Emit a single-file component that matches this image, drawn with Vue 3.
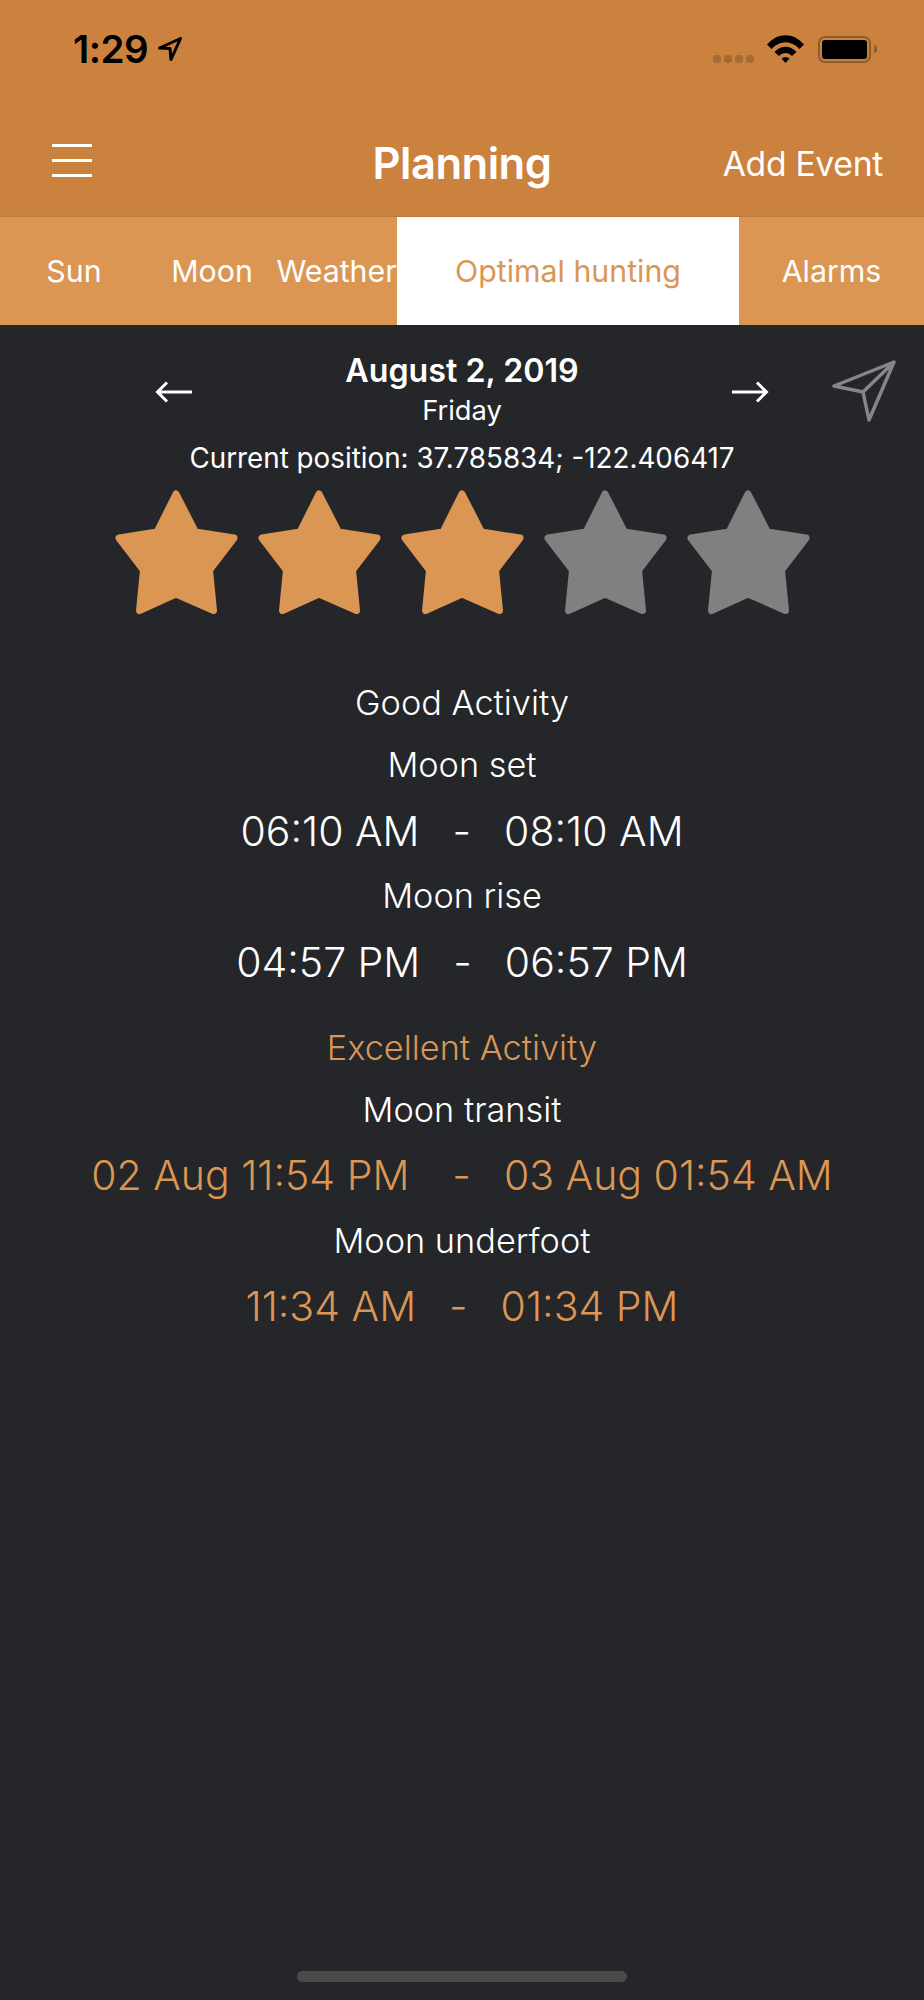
<template>
  <div class="screen">
    <header class="top">
      <div class="status">
        <div class="clock">
          <span>1:29</span>
          <svg class="loc" viewBox="0 0 24 24" width="24" height="24">
            <path d="M1.500 11 22.500 1.500 13 22.500 12 11.500Z" fill="none" stroke="#000" stroke-width="3" stroke-linejoin="round" />
          </svg>
        </div>
        <div class="indicators">
          <div class="signal">
            <i v-for="n in 4" :key="n"></i>
          </div>
          <svg class="wifi" viewBox="0 0 37 28" width="37" height="28">
            <path d="M0 9.500C10.500 -3 26.500 -3 37 9.500L32.500 14C24.500 5 12.500 5 4.500 14Z" fill="#000" />
            <path d="M7.500 17C14 10 23 10 29.500 17L25 21C21 17 16 17 12 21Z" fill="#000" />
            <path d="M14.500 23.500C17 21.500 20 21.500 22.500 23.500L18.500 28Z" fill="#000" />
          </svg>
          <div class="battery">
            <div class="cell"></div>
          </div>
          <div class="nub"></div>
        </div>
      </div>
      <div class="nav">
        <div class="menu"><i></i><i></i><i></i></div>
        <div class="title">Planning</div>
        <div class="action">Add Event</div>
      </div>
    </header>

    <nav class="tabs">
      <div
        v-for="tab in tabs"
        :key="tab.label"
        class="tab"
        :class="{ active: tab.active }"
        :style="{ width: tab.width + 'px' }"
      >
        {{ tab.label }}
      </div>
    </nav>

    <main class="content">
      <div class="date-row">
        <svg class="arrow" viewBox="0 0 38 24" width="38" height="24">
          <path d="M37 12H2.500M12 2.500 2.500 12 12 21.500" fill="none" stroke="#fff" stroke-width="3" />
        </svg>
        <div class="date">
          <div class="day">August 2, 2019</div>
          <div class="weekday">Friday</div>
        </div>
        <svg class="arrow" viewBox="0 0 38 24" width="38" height="24">
          <path d="M1 12H35.500M26 2.500 35.500 12 26 21.500" fill="none" stroke="#fff" stroke-width="3" />
        </svg>
        <svg class="send" viewBox="0 0 64 62" width="64" height="62">
          <path d="M62 2 2 26 31 32ZM62 2 37 60 31 32" fill="none" stroke="#85868a" stroke-width="3.500" stroke-linejoin="round" />
        </svg>
      </div>
      <div class="position">Current position: 37.785834; -122.406417</div>

      <div class="stars">
        <svg
          v-for="n in 5"
          :key="n"
          class="star"
          :class="{ on: n <= 3 }"
          viewBox="0 0 124 125"
          width="124"
          height="125"
        >
          <path d="M62 4 81.500 42 120 48 95.500 80 99.500 120.500 62 104 25.500 120.500 29.500 80 5 48 43 42Z" stroke-width="7" stroke-linejoin="round" />
        </svg>
      </div>

      <section v-for="group in groups" :key="group.title" class="group" :class="{ best: group.best }">
        <div class="label heading">{{ group.title }}</div>
        <template v-for="row in group.rows" :key="row.name">
          <div class="label">{{ row.name }}</div>
          <div class="times" :class="{ wide: row.wide }">
            <span class="from">{{ row.from }}</span>
            <span class="dash">-</span>
            <span>{{ row.to }}</span>
          </div>
        </template>
      </section>
    </main>

    <div class="home"></div>
  </div>
</template>

<script setup>
const tabs = [
  { label: 'Sun', width: 148 },
  { label: 'Moon', width: 128 },
  { label: 'Weather', width: 121 },
  { label: 'Optimal hunting', width: 342, active: true },
  { label: 'Alarms', width: 185 }
]

const groups = [
  {
    title: 'Good Activity',
    rows: [
      { name: 'Moon set', from: '06:10 AM', to: '08:10 AM' },
      { name: 'Moon rise', from: '04:57 PM', to: '06:57 PM' }
    ]
  },
  {
    title: 'Excellent Activity',
    best: true,
    rows: [
      { name: 'Moon transit', from: '02 Aug 11:54 PM', to: '03 Aug 01:54 AM', wide: true },
      { name: 'Moon underfoot', from: '11:34 AM', to: '01:34 PM' }
    ]
  }
]
</script>

<style>
html,
body {
  margin: 0;
  background: #24262a;
}
</style>

<style scoped>
.screen {
  position: relative;
  display: flex;
  flex-direction: column;
  width: 924px;
  height: 2000px;
  overflow: hidden;
  background: #24262a;
  color: #fff;
  font-family: Inter, "Noto Sans", sans-serif;
}

/* Header */
.top {
  height: 217px;
  box-sizing: border-box;
  background: #cb823e;
  border-bottom: 1px solid #bd7a3b;
}

.status {
  display: flex;
  justify-content: space-between;
  align-items: center;
  height: 98px;
  padding: 0 47px 0 73px;
  color: #000;
}

.clock {
  display: flex;
  align-items: center;
  gap: 10px;
  font-size: 38.500px;
  font-weight: 600;
  letter-spacing: -0.500px;
}

.indicators {
  display: flex;
  align-items: center;
}

.signal {
  display: flex;
  gap: 3px;
  margin: 20px 13px 0 0;
}

.signal i {
  width: 8px;
  height: 8px;
  border-radius: 3px;
  background: #a66a33;
}

.battery {
  box-sizing: border-box;
  width: 53px;
  height: 27px;
  margin-left: 14px;
  padding: 2px;
  border: 2px solid #8f5d2d;
  border-radius: 7px;
}

.cell {
  width: 100%;
  height: 100%;
  border-radius: 3px;
  background: #000;
}

.nub {
  width: 3px;
  height: 8px;
  margin-left: 3px;
  border-radius: 0 3px 3px 0;
  background: #8f5d2d;
}

.nav {
  position: relative;
  box-sizing: border-box;
  display: flex;
  justify-content: space-between;
  align-items: center;
  height: 118px;
  padding: 6px 41px 0 52px;
}

.menu {
  display: flex;
  flex-direction: column;
  gap: 12px;
  width: 40px;
}

.menu i {
  height: 3px;
  background: #fff;
}

.title {
  position: absolute;
  left: 0;
  right: 0;
  margin-top: 6px;
  text-align: center;
  font-size: 43.500px;
  font-weight: 600;
  letter-spacing: -0.500px;
}

.action {
  margin-top: 6px;
  font-size: 33.700px;
  font-weight: 400;
  letter-spacing: -0.300px;
}

/* Tabs */
.tabs {
  display: flex;
  height: 108px;
  background: #db9653;
}

.tab {
  display: flex;
  justify-content: center;
  align-items: center;
  font-size: 30.300px;
  white-space: nowrap;
}

.tab.active {
  background: #fff;
  color: #db9653;
}

/* Content */
.date-row {
  box-sizing: border-box;
  display: flex;
  align-items: center;
  height: 110px;
  padding: 24px 0 0 155px;
}

.date {
  width: 538px;
  margin-top: -3px;
  text-align: center;
}

.day {
  font-size: 32.200px;
  font-weight: 600;
  line-height: 41px;
}

.weekday {
  font-size: 27.300px;
  line-height: 40px;
}

.send {
  margin: -2px 0 0 63px;
}

.position {
  margin-top: 3px;
  font-size: 27.800px;
  line-height: 40px;
  text-align: center;
}

.stars {
  display: flex;
  justify-content: center;
  gap: 19px;
  margin-top: 12px;
}

.star {
  fill: #808080;
  stroke: #808080;
}

.star.on {
  fill: #db9653;
  stroke: #db9653;
}

.group {
  margin-top: 57px;
  text-align: center;
}

.group + .group {
  margin-top: 23px;
}

.label {
  margin-bottom: 3px;
  font-size: 34.300px;
  font-weight: 300;
  line-height: 62px;
}

.label.heading {
  margin-bottom: 0;
}

.best .label {
  margin-bottom: 2px;
}

.best .heading {
  margin-bottom: 0;
}

.best .heading,
.best .times {
  color: #db9653;
}

.times {
  display: flex;
  justify-content: center;
  gap: 33px;
  margin-bottom: 2px;
  font-size: 41px;
  font-weight: 300;
  line-height: 64px;
}

.best .times {
  margin-bottom: 3px;
}

.times.wide .from {
  margin-right: 10px;
}

.home {
  position: absolute;
  left: 297px;
  bottom: 18px;
  width: 330px;
  height: 11px;
  border-radius: 5.500px;
  background: #4a4a4a;
}
</style>
